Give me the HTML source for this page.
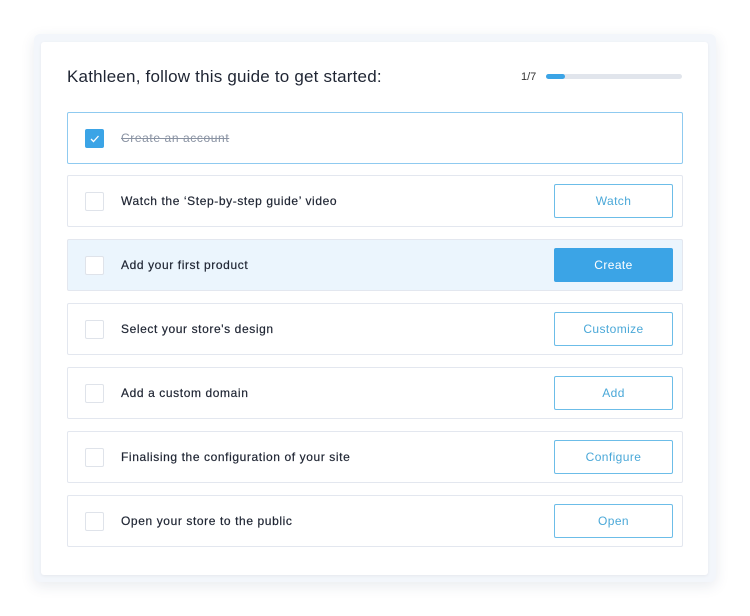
<!DOCTYPE html>
<html><head><style>
body{margin:0;width:750px;height:616px;background:#fff;font-family:"Liberation Sans",sans-serif;position:relative;overflow:hidden}
.outer{position:absolute;left:34px;top:34px;width:682px;height:548px;background:#f3f6fb;border-radius:6px;box-shadow:0 4px 14px rgba(40,60,100,.10)}
.card{position:absolute;left:41px;top:42px;width:667px;height:533px;background:#fff;border-radius:3px;box-shadow:0 1px 3px rgba(0,0,0,.06)}
.title{position:absolute;left:67px;top:67px;font-size:17px;letter-spacing:0.2px;color:#1f2533}
.prog{position:absolute;left:521px;top:71px;font-size:11px;color:#333}
.bar{position:absolute;left:546px;top:74px;width:136px;height:5px;background:#e1e5ec;border-radius:3px}
.bar i{position:absolute;left:0;top:0;width:19px;height:5px;background:#3ba4e6;border-radius:3px}
.row{position:absolute;left:67px;width:614px;height:50px;border:1px solid #e3e7ef;border-radius:2px;background:#fff}
.row .cb{position:absolute;left:17px;top:16px;width:17px;height:17px;border:1px solid #dfe3ea;border-radius:2px;background:#fff}
.row .t{position:absolute;left:53px;top:18px;font-size:12px;letter-spacing:0.6px;color:#1f2533;-webkit-text-stroke:0.2px #1f2533}
.btn{position:absolute;left:486px;top:8px;width:117px;height:32px;border:1px solid #6cbde8;border-radius:2px;color:#4aa8d8;font-size:12px;letter-spacing:0.4px;text-align:center;line-height:32px;background:#fff}
</style></head><body>
<div class="outer"></div>
<div class="card"></div>
<div class="title">Kathleen, follow this guide to get started:</div>
<div class="prog">1/7</div>
<div class="bar"><i></i></div>

<div class="row" style="top:112px;border-color:#8fcaf0">
<div class="cb" style="background:#3ba4e6;border-color:#3ba4e6;top:16px"><svg width="17" height="17" viewBox="0 0 17 17"><path d="M5 9l2.5 2.5L12.5 6" stroke="#fff" stroke-width="1.3" fill="none"/></svg></div>
<div class="t" style="color:#8a93a3;-webkit-text-stroke:0;text-decoration:line-through">Create an account</div></div>

<div class="row" style="top:175px"><div class="cb"></div><div class="t">Watch the ‘Step-by-step guide’ video</div><div class="btn">Watch</div></div>
<div class="row" style="top:239px;background:#ebf5fd"><div class="cb"></div><div class="t">Add your first product</div><div class="btn" style="background:#3ba4e6;border-color:#3ba4e6;color:#fff">Create</div></div>
<div class="row" style="top:303px"><div class="cb"></div><div class="t">Select your store's design</div><div class="btn">Customize</div></div>
<div class="row" style="top:367px"><div class="cb"></div><div class="t">Add a custom domain</div><div class="btn">Add</div></div>
<div class="row" style="top:431px"><div class="cb"></div><div class="t">Finalising the configuration of your site</div><div class="btn">Configure</div></div>
<div class="row" style="top:495px"><div class="cb"></div><div class="t">Open your store to the public</div><div class="btn">Open</div></div>
</body></html>
